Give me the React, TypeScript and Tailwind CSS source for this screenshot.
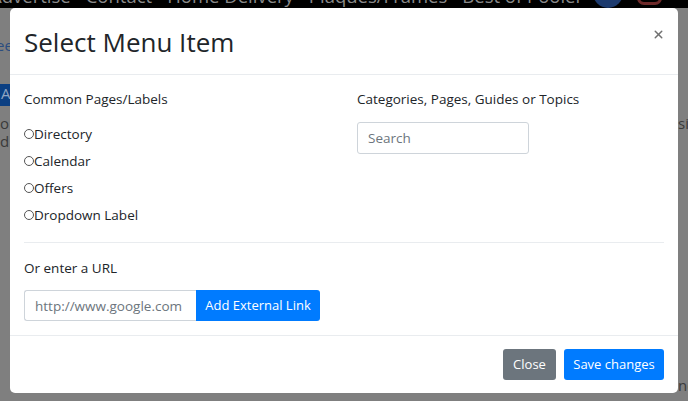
import { X } from 'lucide-react';

const font = { fontFamily: '"Open Sans", "Noto Sans", sans-serif' };

function Backdrop() {
  return (
    <div className="absolute inset-0 bg-[#7f7f7f] overflow-hidden">
      <div className="relative h-[8px] bg-[#000] overflow-hidden">
        <div className="flex gap-[15px] ml-[-10px] mt-[-15px] text-[18.5px] leading-[22px] text-[#8a8a8a] whitespace-nowrap">
          <span>Advertise</span>
          <span>Contact</span>
          <span>Home Delivery</span>
          <span>Plaques/Frames</span>
          <span>Best of Pooler</span>
        </div>
        <span className="absolute left-[593px] top-[-22px] w-[30px] h-[30px] rounded-full bg-[#1c3a6e]" />
        <span className="absolute left-[637px] top-[-20px] w-[25px] h-[25px] rounded-[7px] border-[3px] border-[#6e2a2a]" />
      </div>
      <div className="flex flex-col w-[12px] text-[15px] leading-[18px]">
        <span className="mt-[28px] text-[#2b4d80] ml-[-4px]">ee</span>
        <span className="mt-[30px] h-[22px] bg-[#0b3f82] text-[#8fa4c2] pl-[1px]">Ac</span>
        <span className="mt-[8px] text-[#3a3a3a]">o</span>
        <span className="text-[#3a3a3a]">d</span>
      </div>
      <div className="absolute right-0 top-[112px] w-[10px] text-[15px] text-[#3a3a3a] overflow-hidden">si</div>
      <div className="absolute right-0 top-[374px] w-[10px] text-[15px] text-[#3a3a3a] overflow-hidden">nc</div>
    </div>
  );
}

function Radio({ label }: { label: string }) {
  return (
    <label className="flex items-center h-[27px] text-[13.5px] text-[#212529]">
      <span className="w-[10px] h-[10px] rounded-full border border-[#555] mt-[-2px]" />
      <span>{label}</span>
    </label>
  );
}

export default function App() {
  return (
    <div className="relative w-[688px] h-[401px] overflow-hidden" style={font}>
      <Backdrop />
      <div className="absolute left-[10px] top-[8px] w-[668px] bg-white rounded-[5px] flex flex-col">
        <div className="flex items-start justify-between h-[67px] px-[14px] border-b border-[#e9ecef]">
          <h2 className="mt-[14px] text-[26px] leading-[40px] font-medium text-[#212529]">Select Menu Item</h2>
          <button className="mt-[20px] mr-[-1px] text-[#707070]">
            <X className="w-[13px] h-[13px]" strokeWidth={2.75} />
          </button>
        </div>
        <div className="px-[14px] pt-[12px]">
          <div className="grid grid-cols-[333px_1fr]">
            <div>
              <p className="text-[13.5px] text-[#212529] leading-[24px] h-[34px]">Common Pages/Labels</p>
              <Radio label="Directory" />
              <Radio label="Calendar" />
              <Radio label="Offers" />
              <Radio label="Dropdown Label" />
            </div>
            <div>
              <p className="text-[13.5px] text-[#212529] leading-[24px] h-[35px]">Categories, Pages, Guides or Topics</p>
              <input
                placeholder="Search"
                className="w-[172px] h-[32px] px-[10px] border border-[#ced4da] rounded-[3px] text-[13.5px] placeholder:text-[#6c757d] outline-none"
              />
            </div>
          </div>
          <div className="mt-[13px] border-t border-[#e9ecef]" />
          <p className="mt-[13px] text-[13.5px] text-[#212529] leading-[24px]">Or enter a URL</p>
          <div className="flex mt-[10px] mb-[14px]">
            <input
              placeholder="http://www.google.com"
              className="w-[172px] h-[31px] px-[10px] border border-[#ced4da] border-r-0 rounded-l-[3px] text-[13.5px] placeholder:text-[#6c757d] outline-none"
            />
            <button className="h-[31px] w-[124px] bg-[#007bff] text-white text-[13px] rounded-r-[3px]">
              Add External Link
            </button>
          </div>
        </div>
        <div className="flex justify-end gap-[8px] px-[14px] pt-[13px] pb-[13px] border-t border-[#e9ecef]">
          <button className="h-[31px] w-[53px] bg-[#6c757d] text-white text-[13px] rounded-[3px]">Close</button>
          <button className="h-[31px] w-[100px] bg-[#007bff] text-white text-[13px] rounded-[3px]">Save changes</button>
        </div>
      </div>
    </div>
  );
}
